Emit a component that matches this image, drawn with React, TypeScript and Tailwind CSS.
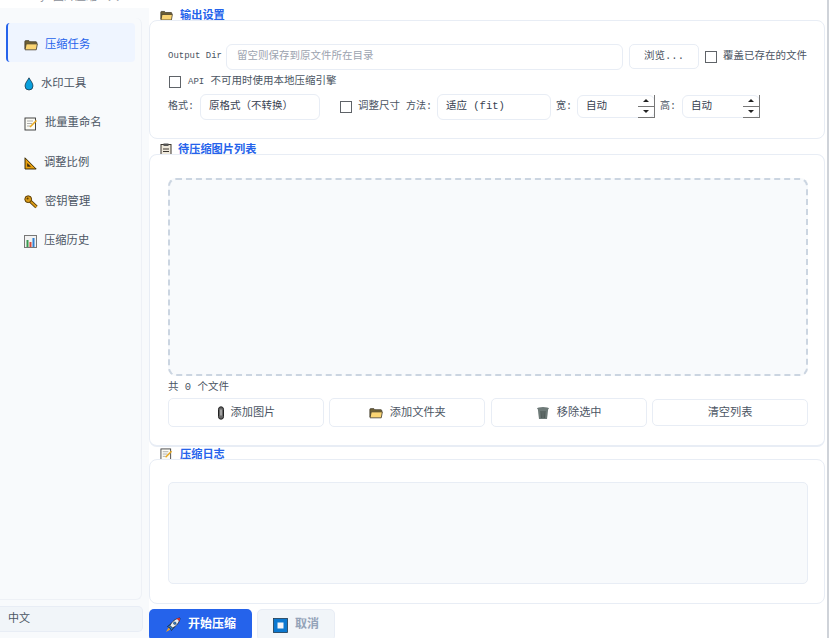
const FONT = 'font-["Liberation_Mono","Noto_Sans_CJK_SC",monospace]'

function FolderIcon({ size = 14 }: { size?: number }) {
  return (
    <svg width={size} height={size} viewBox="0 0 16 16" className="shrink-0">
      <path d="M1 12.500V3.800c0-.5.3-.8.8-.8h3.800l1.200 1.300h6.900c.5 0 .8.3.8.8v2" fill="#6f6136" stroke="#3f3828" strokeWidth="0.900" />
      <path d="M1.200 13.500l1.300-6.800h12.800l-1.300 6.800z" fill="#fbd573" stroke="#3f3828" strokeWidth="0.900" />
    </svg>
  )
}

function DropIcon() {
  return (
    <svg width="10" height="14" viewBox="0 0 10 14" className="shrink-0">
      <path d="M5 .8C3.600 3.500 1 6 1 9a4 4 0 0 0 8 0C9 6 6.400 3.500 5 .8z" fill="#0aa0dc" stroke="#123" strokeWidth="0.700" />
    </svg>
  )
}

function MemoIcon({ size = 14 }: { size?: number }) {
  return (
    <svg width={size} height={size} viewBox="0 0 14 14" className="shrink-0">
      <rect x="1" y="1" width="10.500" height="12" fill="#fbfbf5" stroke="#333" strokeWidth="0.900" />
      <path d="M3 4h6M3 6.500h5M3 9h3" stroke="#999" strokeWidth="0.800" />
      <path d="M6 10l6.500-6.500" stroke="#e8a820" strokeWidth="1.600" />
    </svg>
  )
}

function RulerIcon() {
  return (
    <svg width="13" height="13" viewBox="0 0 13 13" className="shrink-0">
      <path d="M1 .8V12h11.200z" fill="#e8a010" stroke="#2a2000" strokeWidth="0.900" />
      <path d="M3.200 6v3.800h3.800z" fill="#3a2a10" />
    </svg>
  )
}

function KeyIcon() {
  return (
    <svg width="14" height="14" viewBox="0 0 14 14" className="shrink-0">
      <path d="M5 5l7.500 7" stroke="#4a3000" strokeWidth="3.400" />
      <path d="M5 5l7.500 7" stroke="#d89a18" strokeWidth="1.800" />
      <circle cx="4.200" cy="4.200" r="3.400" fill="#d89a18" stroke="#4a3000" strokeWidth="0.900" />
      <circle cx="3.600" cy="3.600" r="1" fill="#5a3c00" />
    </svg>
  )
}

function ChartIcon() {
  return (
    <svg width="13" height="13" viewBox="0 0 13 13" className="shrink-0">
      <rect x="0.500" y="0.500" width="12" height="12" fill="#f2f2f2" stroke="#777" />
      <rect x="2.500" y="5" width="2" height="7" fill="#3a9a50" />
      <rect x="5.500" y="7" width="2" height="5" fill="#d84a3a" />
      <rect x="8.500" y="3" width="2" height="9" fill="#2f7fd0" />
    </svg>
  )
}

function ClipboardIcon() {
  return (
    <svg width="12" height="13" viewBox="0 0 12 13" className="shrink-0">
      <rect x="1" y="1.500" width="10" height="11" fill="#efe9dc" stroke="#3c3730" />
      <rect x="3.500" y="0.500" width="5" height="2.500" fill="#555" />
      <path d="M3 6h6M3 8.500h6" stroke="#3c3730" />
    </svg>
  )
}

function PaperclipIcon() {
  return (
    <svg width="8" height="14" viewBox="0 0 8 14" className="shrink-0">
      <rect x="1.500" y="0.800" width="5" height="12.400" rx="2.500" fill="#666" stroke="#222" />
      <path d="M4 3.500v6" stroke="#ddd" />
    </svg>
  )
}

function TrashIcon() {
  return (
    <svg width="14" height="14" viewBox="0 0 14 14" className="shrink-0">
      <ellipse cx="7" cy="2.500" rx="6" ry="1.500" fill="#6e7a78" />
      <path d="M1.800 3l1.200 10h8l1.200-10z" fill="#6e7a78" />
      <path d="M5 5l.4 7M7 5v7M9 5l-.4 7" stroke="#3c4644" strokeWidth="0.700" />
    </svg>
  )
}

function RocketIcon() {
  return (
    <svg width="16" height="16" viewBox="0 0 16 16" className="shrink-0">
      <path d="M1 15l2.500-4.500 2 2z" fill="#f5a020" />
      <path d="M2.500 9.500l3-2.500 3.500 3.500-2.500 3-1.500-2.500z" fill="#2f7fd0" stroke="#111" strokeWidth="0.600" />
      <path d="M5 8.500C7 4.500 10.500 1.500 15 1c-.5 4.500-3.500 8-7.500 10z" fill="#e8edf2" stroke="#111" strokeWidth="0.700" />
      <path d="M11.500 1.500L15 1l-.5 3.500z" fill="#d8262c" />
      <circle cx="9.800" cy="6.200" r="1.300" fill="#2f7fd0" stroke="#111" strokeWidth="0.400" />
    </svg>
  )
}

function StopIcon() {
  return (
    <svg width="15" height="15" viewBox="0 0 15 15" className="shrink-0">
      <rect x="0.500" y="0.500" width="14" height="14" fill="#0b78d0" stroke="#1f3a52" strokeWidth="0.800" />
      <rect x="4.500" y="4.500" width="6" height="6" fill="#f4f6fa" />
    </svg>
  )
}

function Checkbox({ label }: { label: string }) {
  return (
    <label className="flex items-center gap-[6px] shrink-0 whitespace-nowrap">
      <span className="w-[12px] h-[12px] border border-[#5f6368] bg-white" />
      <span className="text-[10.500px] text-[#4b5563]">{label}</span>
    </label>
  )
}

function Field({ children, className }: { children: React.ReactNode; className: string }) {
  return (
    <div className={`h-[26px] flex items-center px-[8px] bg-white border border-[#e8edf5] rounded-[6px] text-[10.500px] text-[#374151] shrink-0 ${className}`}>
      {children}
    </div>
  )
}

function Spin() {
  return (
    <div className="relative w-[78px] h-[23px] flex items-center px-[8px] pt-[1px] bg-white border border-[#e8edf5] rounded-[6px] text-[10.500px] text-[#374151] shrink-0">
      自动
      <div className="absolute -right-px -top-px -bottom-px w-[17px] flex flex-col border-r border-b border-[#777]">
        <div className="flex-1 flex items-center justify-center border-b border-[#777]">
          <span className="w-0 h-0 border-x-[3px] border-x-transparent border-b-[3px] border-b-[#222]" />
        </div>
        <div className="flex-1 flex items-center justify-center">
          <span className="w-0 h-0 border-x-[3px] border-x-transparent border-t-[3px] border-t-[#222]" />
        </div>
      </div>
    </div>
  )
}

function SectionTitle({ icon, title, gap }: { icon: React.ReactNode; title: string; gap: string }) {
  return (
    <div className={`h-[11px] overflow-hidden flex items-start pl-[11px] ${gap} shrink-0`}>
      <div className="h-[13px] flex items-center">{icon}</div>
      <span className="pt-[1px] text-[11.200px] leading-[13px] font-bold text-[#2563eb]">{title}</span>
    </div>
  )
}

function Card({ children, className }: { children: React.ReactNode; className: string }) {
  return <div className={`bg-white border border-[#e8edf5] rounded-[8px] shrink-0 ${className}`}>{children}</div>
}

function ActionButton({ icon, label, gap = 'gap-[7px]', height = 'h-[29px]' }: { icon?: React.ReactNode; label: string; gap?: string; height?: string }) {
  return (
    <div className={`flex-1 ${height} pt-[1px] flex items-center justify-center ${gap} bg-white border border-[#e8edf5] rounded-[5px] text-[11.200px] text-[#4b5563]`}>
      {icon}
      {label}
    </div>
  )
}

const navItems = [
  { label: '压缩任务', icon: <FolderIcon />, gap: 'gap-[7px]' },
  { label: '水印工具', icon: <DropIcon />, gap: 'gap-[7px]' },
  { label: '批量重命名', icon: <MemoIcon />, gap: 'gap-[7px]' },
  { label: '调整比例', icon: <RulerIcon />, gap: 'gap-[7px]' },
  { label: '密钥管理', icon: <KeyIcon />, gap: 'gap-[7px]' },
  { label: '压缩历史', icon: <ChartIcon />, gap: 'gap-[7px]' },
]

export default function App() {
  return (
    <div className={`w-[829px] h-[638px] overflow-hidden bg-white flex ${FONT}`}>
      <aside className="w-[149px] shrink-0 flex flex-col">
        <div className="h-[8px] bg-white shrink-0 overflow-hidden pl-[20px]">
          <div className="-mt-[9px] text-[11px] leading-[13px] text-[#8a8f98] whitespace-nowrap">Tiny 图片压缩工具</div>
        </div>
        <div className="flex-1 bg-[#f8fafc] flex flex-col pr-[7px] pb-[6px] pt-[10px] min-h-0">
          <div className="flex-1 min-h-0 border-r border-b border-[#eef1f6] rounded-r-[6px] pt-[5px] pl-[6px] pr-[6px] flex flex-col">
            {navItems.map((item, i) => (
              <div
                key={item.label}
                className={`h-[39.300px] pt-[5px] rounded-[4px] flex items-center ${item.gap} text-[11.300px] ${
                  i === 0 ? 'bg-[#eff5ff] text-[#2563eb] border-l-[2px] border-[#2563eb] pl-[16px]' : 'text-[#4b5563] pl-[18px]'
                }`}
              >
                {item.icon}
                {item.label}
              </div>
            ))}
          </div>
        </div>
        <div className="h-[32px] bg-[#f8fafc] shrink-0">
          <div className="h-[26px] pt-[1px] bg-[#f1f5f9] border border-l-0 border-[#e8edf5] rounded-r-[5px] w-[143px] flex items-center pl-[8px] text-[11px] text-[#4b5563]">
            中文
          </div>
        </div>
      </aside>

      <main className="flex-1 min-w-0 flex flex-col pt-[9px] pr-[2px] border-r-2 border-[#cfd3d9]">
        <SectionTitle icon={<FolderIcon size={13} />} title="输出设置" gap="gap-[7px]" />
        <Card className="h-[119px] pt-[22px] pl-[18px] pr-[16px]">
          <div className="flex items-center h-[27px]">
            <span className="w-[58px] pt-[1px] text-[9px] text-[#4b5563] shrink-0 whitespace-nowrap">Output Dir</span>
            <Field className="w-[397px]">
              <span className="pl-[2px] text-[#9ca3af]">留空则保存到原文件所在目录</span>
            </Field>
            <div className="ml-[6px] w-[70px] h-[25px] flex items-center justify-center bg-white border border-[#e8edf5] rounded-[5px] text-[10.500px] text-[#4b5563] shrink-0">
              浏览...
            </div>
            <div className="ml-[6px]">
              <Checkbox label="覆盖已存在的文件" />
            </div>
          </div>
          <div className="flex items-center h-[23px] pl-[1px]">
            <span className="w-[12px] h-[12px] border border-[#5f6368] mr-[7px]" />
            <span className="text-[10.500px] text-[#4b5563] whitespace-nowrap"><span className="text-[9px]">API</span> 不可用时使用本地压缩引擎</span>
          </div>
          <div className="flex items-center h-[27px]">
            <span className="text-[10px] text-[#4b5563] w-[32px] shrink-0">格式:</span>
            <Field className="w-[120px]">原格式（不转换）</Field>
            <div className="ml-[20px] flex items-center">
              <Checkbox label="调整尺寸" />
            </div>
            <span className="ml-[6px] w-[31px] text-[10px] text-[#4b5563] shrink-0">方法:</span>
            <Field className="w-[114px]">适应 (fit)</Field>
            <span className="ml-[5px] w-[21px] text-[10px] text-[#4b5563] shrink-0">宽:</span>
            <Spin />
            <span className="ml-[5px] w-[22px] text-[10px] text-[#4b5563] shrink-0">高:</span>
            <Spin />
          </div>
        </Card>

        <div className="h-[4px] shrink-0" />
        <SectionTitle icon={<ClipboardIcon />} title="待压缩图片列表" gap="gap-[6px]" />
        <Card className="h-[293px] pt-[23px] pl-[18px] pr-[16px] border-b-[2px] flex flex-col">
          <div className="h-[198px] shrink-0 bg-[#f8fafc] border-2 border-dashed border-[#cbd5e1] rounded-[8px]" />
          <div className="h-[22px] flex items-center text-[10.500px] text-[#4b5563] pt-[1px]">共 0 个文件</div>
          <div className="flex items-center gap-[5.500px]">
            <ActionButton icon={<PaperclipIcon />} label="添加图片" gap="gap-[6px]" />
            <ActionButton icon={<FolderIcon />} label="添加文件夹" />
            <ActionButton icon={<TrashIcon />} label="移除选中" />
            <ActionButton label="清空列表" height="h-[27px]" />
          </div>
        </Card>

        <div className="h-[1px] shrink-0" />
        <SectionTitle icon={<MemoIcon size={13} />} title="压缩日志" gap="gap-[7px]" />
        <Card className="h-[145px] pt-[22px] pl-[18px] pr-[16px]">
          <div className="h-[102px] bg-[#f8fafc] border border-[#e8edf5] rounded-[5px]" />
        </Card>

        <div className="flex gap-[5px] mt-[5px] shrink-0">
          <div className="w-[103px] h-[32px] bg-[#2563eb] rounded-[5px] flex items-center justify-center gap-[7px] text-[12px] font-bold text-white">
            <RocketIcon />
            开始压缩
          </div>
          <div className="w-[78px] h-[32px] bg-[#f1f5f9] border border-[#e8edf5] rounded-[5px] flex items-center justify-center gap-[7px] text-[12px] font-bold text-[#94a3b8]">
            <StopIcon />
            取消
          </div>
        </div>
      </main>
    </div>
  )
}
